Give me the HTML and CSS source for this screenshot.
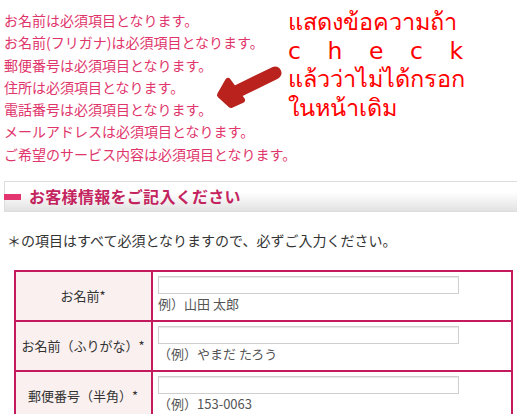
FILE: index.html
```html
<!DOCTYPE html>
<html lang="ja">
<head>
	<meta charset="UTF-8">
	<title>お客様情報</title>
	<link rel="stylesheet" href="styles.css">
</head>
<body>
<div id="errors">
	<ul class="error_list">
		<li>お名前は必須項目となります。</li>
		<li>お名前(フリガナ)は必須項目となります。</li>
		<li>郵便番号は必須項目となります。</li>
		<li>住所は必須項目となります。</li>
		<li>電話番号は必須項目となります。</li>
		<li>メールアドレスは必須項目となります。</li>
		<li>ご希望のサービス内容は必須項目となります。</li>
	</ul>

	<!-- annotation -->
	<svg class="arrow" width="80" height="50" viewBox="0 0 80 50">
		<line x1="65" y1="13" x2="24" y2="33" stroke="#b9221d" stroke-width="13" stroke-linecap="round"/>
		<path d="M18 21 L10 35 L21 45 L32 40 Z" fill="#b9221d" stroke="#b9221d" stroke-width="6" stroke-linejoin="round"/>
	</svg>
	<div class="note">
		<div>แสดงข้อความถ้า</div>
		<div class="spread">c h e c k</div>
		<div>แล้วว่าไม่ได้กรอก</div>
		<div>ในหน้าเดิม</div>
	</div>
</div>

<h2 class="section_title">お客様情報をご記入ください</h2>

<p class="lead">＊の項目はすべて必須となりますので、必ずご入力ください。</p>

<table class="form_table">
	<tr>
		<th>お名前*</th>
		<td>
			<input type="text">
			<div class="hint">例）山田 太郎</div>
		</td>
	</tr>
	<tr>
		<th>お名前（ふりがな）*</th>
		<td>
			<input type="text">
			<div class="hint">（例）やまだ たろう</div>
		</td>
	</tr>
	<tr>
		<th>郵便番号（半角）*</th>
		<td>
			<input type="text">
			<div class="hint">（例）153-0063</div>
		</td>
	</tr>
</table>
</body>
</html>
```

FILE: styles.css
```css
body{
	margin: 0;
	padding: 0 0 0 4px;
	color: #333;
	font-family: "Noto Sans CJK JP", "Noto Sans", sans-serif;
	font-size: 14px;
	background: #fff;
}

#errors{
	position: relative;
}
.error_list{
	list-style: none;
	margin: 0;
	padding: 9px 0 0;
	color: #e0356b;
	font-size: 14px;
	line-height: 22.3px;
}

.arrow{
	position: absolute;
	left: 206px;
	top: 60px;
}
.note{
	position: absolute;
	left: 284px;
	top: 8px;
	width: 175px;
	color: #ff0000;
	font-family: "DejaVu Sans", sans-serif;
	font-size: 23.5px;
	line-height: 28.5px;
	white-space: nowrap;
}
.spread{
	text-align: justify;
	text-align-last: justify;
	white-space: normal;
}

.section_title{
	margin: 16px 0 0;
	height: 29px;
	padding-left: 24px;
	border: 1px solid #dcdcdc;
	border-right: none;
	background: linear-gradient(#fff 0%, #fff 35%, #e2e2e2 100%);
	color: #c4245e;
	font-size: 16px;
	font-weight: bold;
	line-height: 29px;
	letter-spacing: 0.3px;
	position: relative;
}
.section_title::before{
	content: "";
	position: absolute;
	left: -1px;
	top: 12px;
	width: 17px;
	height: 6px;
	background: #e33570;
}

.lead{
	margin: 18px 0 0 3px;
	font-size: 14px;
	line-height: 20px;
}

.form_table{
	margin: 20px 0 0 10px;
	width: 499px;
	border-collapse: collapse;
}
.form_table th,
.form_table td{
	border: 2px solid #c3195d;
	padding: 4px 6px 6px 5px;
	vertical-align: middle;
	font-size: 13px;
}
.form_table th{
	width: 124px;
	background: #f9f0ef;
	font-weight: normal;
	text-align: center;
	color: #333;
}
.form_table input{
	display: block;
	width: 301px;
	height: 18px;
	box-sizing: border-box;
	margin: 0;
	border: 1px solid #cfcfcf;
	box-shadow: inset 0 1px 1px #e6e6e6;
}
.hint{
	margin-top: 0;
	line-height: 20px;
	color: #555;
}
```
